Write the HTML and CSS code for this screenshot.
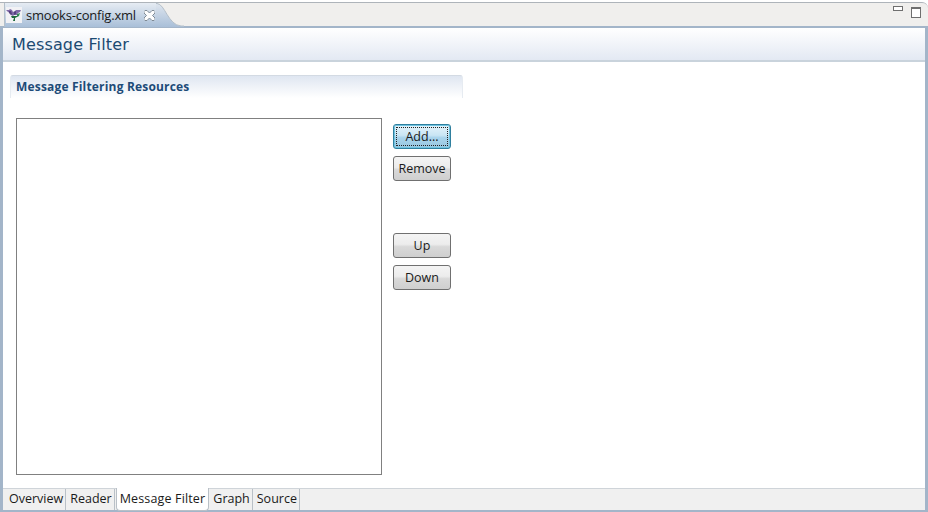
FILE: index.html
```html
<!DOCTYPE html>
<html lang="en">
<head>
<meta charset="utf-8">
<title>smooks-config.xml</title>
<link rel="stylesheet" href="styles.css">
</head>
<body>
<div class="editor">
  <div class="tabbar">
    <div class="tab">
      <svg class="file-icon" width="16" height="16" viewBox="0 0 16 16">
        <rect width="16" height="16" fill="#f2f2f5"/>
        <path d="M0 3h3l1-1 2 1 1 2 2-1 1-1 5 0-1 2-2 1-1 2-3 0-1 1-2-1-1-2-2-1z" fill="#7f68a6"/>
        <path d="M3 4l2 0 1 3-1 1-2-2zM8 5l2-1 0 3-2 1z" fill="#56407f"/>
        <path d="M5 9h8l-2 1-2 1v3H7l1-3H6z" fill="#1f6a3c"/>
        <path d="M11 7l3-1-1 3-2 0z" fill="#2f8a52"/>
      </svg>
      <span class="tab-label">smooks-config.xml</span>
      <svg class="close-icon" width="11" height="11" viewBox="0 0 11 11">
        <path d="M1 0.500h2l2.500 2.500 2.500-2.500h2l1 1v1.500l-2.500 2.500 2.500 2.500v1.500l-1 1h-2l-2.500-2.500-2.500 2.500h-2l-1-1v-1.500l2.500-2.500-2.500-2.500v-1.500z" fill="#fdfdfd" stroke="#7f8a95"/>
      </svg>
    </div>
    <svg class="tab-curve" width="28" height="24" viewBox="0 0 28 24" preserveAspectRatio="none">
      <defs>
        <linearGradient id="curveFill" x1="0" y1="0" x2="0" y2="1">
          <stop offset="0" stop-color="#dfe6ef"/>
          <stop offset="1" stop-color="#a9bfd8"/>
        </linearGradient>
      </defs>
      <path d="M0 0.500h1C9 1 12 22 25 23h3V24H0z" fill="url(#curveFill)"/>
      <path d="M0 0.500h1C9 1 12 22 25 23h3" fill="none" stroke="#b4bfc9"/>
    </svg>
    <div class="tabbar-spacer"></div>
    <div class="window-controls">
      <span class="minimize"></span>
      <span class="maximize"></span>
    </div>
  </div>
  <div class="body">
    <header class="form-header">Message Filter</header>
    <main class="form-content">
      <section class="section">
        <h2 class="section-title">Message Filtering Resources</h2>
        <div class="section-client">
          <div class="list"></div>
          <div class="actions">
            <button class="btn btn-focus"><span class="btn-focus-ring">Add...</span></button>
            <button class="btn">Remove</button>
            <div class="actions-gap"></div>
            <button class="btn">Up</button>
            <button class="btn">Down</button>
          </div>
        </div>
      </section>
    </main>
    <nav class="pages">
      <span class="page">Overview</span>
      <span class="page">Reader</span>
      <span class="page page-active">Message Filter</span>
      <span class="page">Graph</span>
      <span class="page">Source</span>
    </nav>
  </div>
</div>
</body>
</html>
```

FILE: styles.css
```css
* { box-sizing: border-box; }

html, body {
  margin: 0;
  padding: 0;
  width: 928px;
  height: 512px;
  overflow: hidden;
  background: #fff;
}

.editor {
  width: 928px;
  height: 512px;
  display: flex;
  flex-direction: column;
  font-family: "Open Sans", "Noto Sans", sans-serif;
  color: #1a1a1a;
}

.tabbar {
  height: 26px;
  margin-top: 2px;
  flex: none;
  display: flex;
  align-items: flex-start;
  padding: 0 0 0 4px;
  background: #f0efed;
  border-top: 1px solid #aeb4ba;
  border-bottom: 2px solid #a3b5c9;
  border-radius: 0 6px 0 0;
}

.tab {
  height: 24px;
  display: flex;
  align-items: center;
  padding: 0 0 0 1px;
  background: linear-gradient(#e6ecf3, #a9bfd8);
  border-left: 1px solid #b4bfc9;
}

.file-icon { flex: none; }

.tab-label {
  margin-left: 4px;
  font-size: 13px;
  letter-spacing: -0.2px;
  line-height: 20px;
  white-space: nowrap;
}

.close-icon {
  margin-left: 8px;
  margin-right: 1px;
  flex: none;
}

.tab-curve { flex: none; }

.tabbar-spacer { flex: 1; }

.window-controls {
  display: flex;
  align-items: flex-start;
  gap: 8px;
  padding: 3px 7px 0 0;
}

.minimize {
  display: block;
  width: 10px;
  height: 5px;
  background: #fff;
  border: 1px solid #6f6f6f;
}

.maximize {
  display: block;
  width: 10px;
  height: 11px;
  margin-top: 1px;
  background: #fff;
  border: 1px solid #6f6f6f;
  border-top-width: 2px;
}

.body {
  flex: 1;
  min-height: 0;
  display: flex;
  flex-direction: column;
  border-left: 3px solid #a3b5c9;
  border-right: 3px solid #a3b5c9;
  border-bottom: 2px solid #a3b5c9;
  background: #fff;
}

.form-header {
  height: 34px;
  flex: none;
  padding: 0 0 0 9px;
  font-family: "DejaVu Sans", sans-serif;
  font-size: 16px;
  letter-spacing: 0.15px;
  line-height: 33px;
  color: #1c4a72;
  background: linear-gradient(#fff, #e3e9f3);
  border-bottom: 2px solid #c9d3dc;
}

.form-content {
  flex: 1;
  min-height: 0;
  padding: 13px 0 0 7px;
}

.section { width: 453px; }

.section-title {
  margin: 0;
  height: 23px;
  padding: 0 0 0 5px;
  font-size: 12px;
  font-weight: 700;
  letter-spacing: 0.18px;
  line-height: 21px;
  color: #1d4b78;
  background: linear-gradient(#dfe6f1, #fff);
  border-top: 1px solid #d3dae3;
  border-left: 1px solid #e6ebf1;
  border-right: 1px solid #e6ebf1;
  border-radius: 3px 3px 0 0;
}

.section-client {
  display: flex;
  align-items: flex-start;
  gap: 11px;
  padding: 20px 0 0 6px;
}

.list {
  width: 366px;
  height: 357px;
  flex: none;
  background: #fff;
  border: 1px solid #808080;
}

.actions {
  display: flex;
  flex-direction: column;
  gap: 7px;
  padding-top: 6px;
}

.actions-gap { height: 38px; }

.btn {
  width: 58px;
  height: 25px;
  padding: 0;
  font-family: "Open Sans", "Noto Sans", sans-serif;
  font-size: 12.500px;
  line-height: 20px;
  color: #1a1a1a;
  background: linear-gradient(#f4f4f4 0%, #ececec 45%, #d9d9d9 55%, #cfcfcf 100%);
  border: 1px solid #707070;
  border-radius: 3px;
}

.btn-focus {
  padding: 2px;
  background: linear-gradient(#e6f4fb 0%, #c9e5f4 45%, #a9d4ec 55%, #97c6e0 100%);
  border-color: #2f7f9e;
  box-shadow: inset 0 0 0 1px #6fc3e0;
}

.btn-focus-ring {
  display: block;
  height: 100%;
  line-height: 17px;
  border: 1px dotted #222;
}

.pages {
  height: 22px;
  flex: none;
  display: flex;
  align-items: stretch;
  padding-left: 2px;
  background: #f0f0f0;
  border-top: 1px solid #cfd4d9;
}

.page {
  padding: 0 2px 0 4px;
  font-size: 12.500px;
  line-height: 20px;
  color: #1a1a1a;
  border-right: 1px solid #b9c0c7;
  white-space: nowrap;
}

.page-active {
  margin: -1px 0 -1px 1px;
  padding: 1px 3px 0 3px;
  letter-spacing: 0.15px;
  background: #fff;
  border-left: 1px solid #b9c0c7;
  border-bottom: 1px solid #b9c0c7;
  border-radius: 0 0 4px 4px;
}
```
